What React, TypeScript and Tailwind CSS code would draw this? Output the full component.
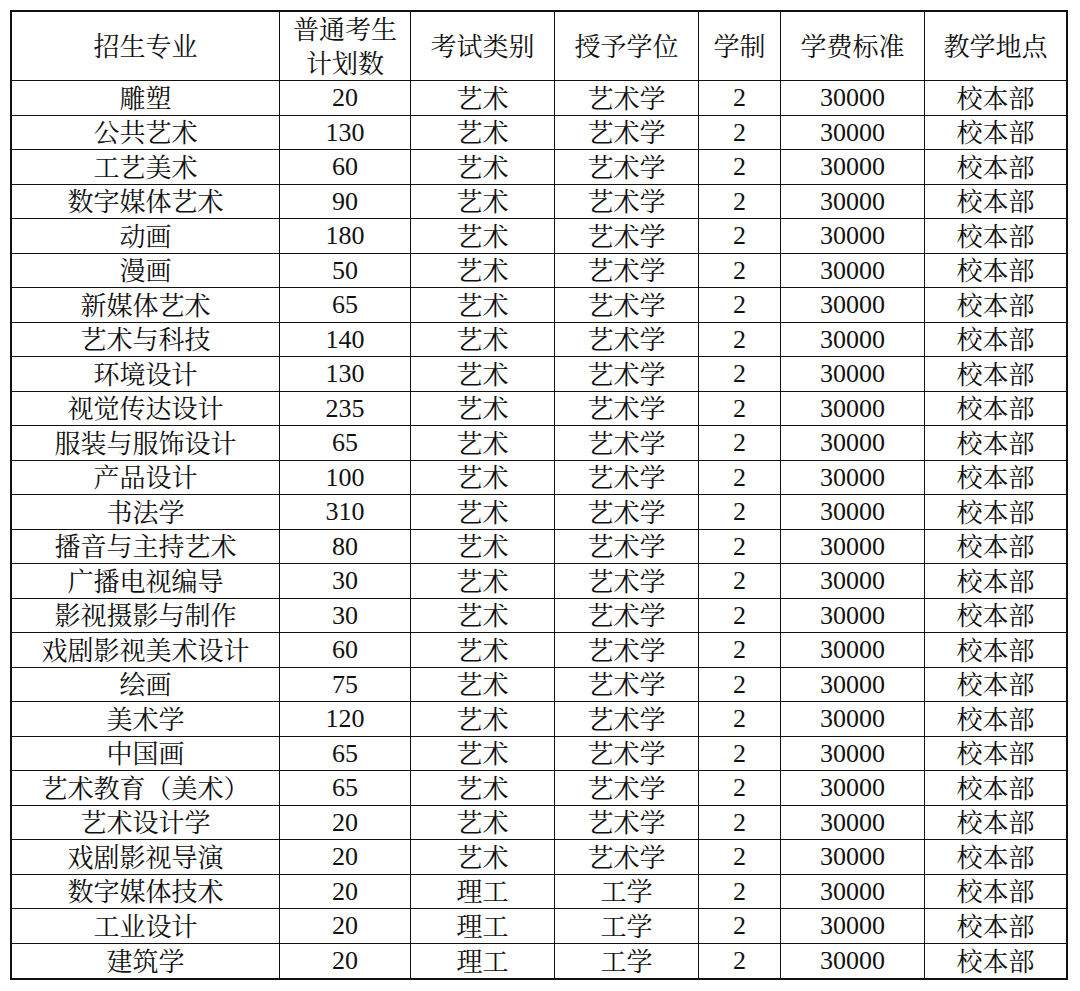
import React from "react";

const rows: [string, string, string, string][] = [
  ["雕塑", "20", "艺术", "艺术学"],
  ["公共艺术", "130", "艺术", "艺术学"],
  ["工艺美术", "60", "艺术", "艺术学"],
  ["数字媒体艺术", "90", "艺术", "艺术学"],
  ["动画", "180", "艺术", "艺术学"],
  ["漫画", "50", "艺术", "艺术学"],
  ["新媒体艺术", "65", "艺术", "艺术学"],
  ["艺术与科技", "140", "艺术", "艺术学"],
  ["环境设计", "130", "艺术", "艺术学"],
  ["视觉传达设计", "235", "艺术", "艺术学"],
  ["服装与服饰设计", "65", "艺术", "艺术学"],
  ["产品设计", "100", "艺术", "艺术学"],
  ["书法学", "310", "艺术", "艺术学"],
  ["播音与主持艺术", "80", "艺术", "艺术学"],
  ["广播电视编导", "30", "艺术", "艺术学"],
  ["影视摄影与制作", "30", "艺术", "艺术学"],
  ["戏剧影视美术设计", "60", "艺术", "艺术学"],
  ["绘画", "75", "艺术", "艺术学"],
  ["美术学", "120", "艺术", "艺术学"],
  ["中国画", "65", "艺术", "艺术学"],
  ["艺术教育（美术）", "65", "艺术", "艺术学"],
  ["艺术设计学", "20", "艺术", "艺术学"],
  ["戏剧影视导演", "20", "艺术", "艺术学"],
  ["数字媒体技术", "20", "理工", "工学"],
  ["工业设计", "20", "理工", "工学"],
  ["建筑学", "20", "理工", "工学"],
];

const widths = ["w-[268px]", "w-[131px]", "w-[144px]", "w-[144px]", "w-[82px]", "w-[144px]", "w-[141px]"];
const cjkCols = [true, false, true, true, false, false, true];

export default function App() {
  return (
    <div
      className="bg-white w-[1080px] h-[991px] pt-[10px] pl-[10px] text-[#111] text-[26px]"
      style={{ fontFamily: '"Liberation Serif", "Noto Serif CJK SC", "Noto Sans CJK SC", serif' }}
    >
      <div className="w-[1058px] border-2 border-[#111] flex flex-col">
        <div className="flex h-[69px] border-b border-[#111]">
          {["招生专业", "普通考生\n计划数", "考试类别", "授予学位", "学制", "学费标准", "教学地点"].map((h, i) => (
            <div
              key={i}
              className={`${widths[i]} ${i < 6 ? "border-r border-[#111]" : ""} flex items-center justify-center text-center leading-[34px] whitespace-pre-line pt-[4px]`}
            >
              {h}
            </div>
          ))}
        </div>
        {rows.map((r, ri) => (
          <div
            key={ri}
            className={`flex h-[34.5px] ${ri < rows.length - 1 ? "border-b border-[#111]" : ""}`}
          >
            {[r[0], r[1], r[2], r[3], "2", "30000", "校本部"].map((c, i) => (
              <div
                key={i}
                className={`${widths[i]} ${i < 6 ? "border-r border-[#111]" : ""} ${cjkCols[i] ? "pt-[4px]" : "pt-[1px]"} flex items-center justify-center leading-none whitespace-nowrap`}
              >
                {c}
              </div>
            ))}
          </div>
        ))}
      </div>
    </div>
  );
}
